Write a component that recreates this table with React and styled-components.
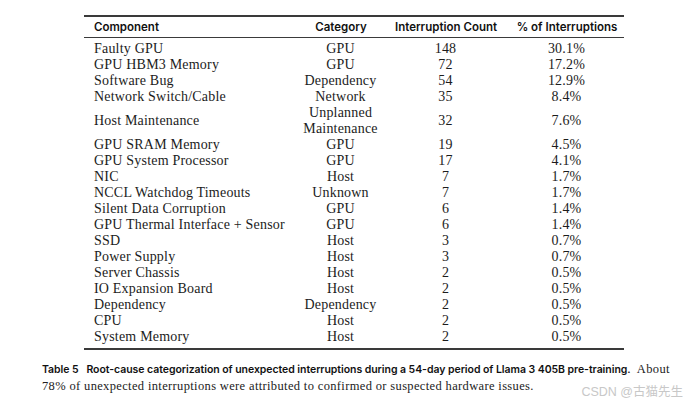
import React from "react";
import styled, { createGlobalStyle } from "styled-components";

const Global = createGlobalStyle`
  html, body { margin: 0; padding: 0; background: #ffffff; }
  body { width: 693px; height: 405px; overflow: hidden; }
`;

const Page = styled.div`
  position: relative;
  width: 693px;
  height: 405px;
  padding: 15px 0 0 42px;
  box-sizing: border-box;
  color: #1c1c1c;
`;

const Table = styled.table`
  margin-left: 42px;
  width: 540px;
  border-collapse: collapse;
  table-layout: fixed;
  border-top: 2px solid #3a3a3a;
  border-bottom: 2px solid #3a3a3a;
`;

const HeadCell = styled.th`
  font-family: Inter, "Liberation Sans", sans-serif;
  font-weight: 600;
  font-size: 11.5px;
  height: 20px;
  padding: 0 ${(p) => (p.$first ? "0 0 10px" : "0")};
  text-align: ${(p) => (p.$first ? "left" : "center")};
  border-bottom: 1px solid #3a3a3a;
  white-space: nowrap;
  color: #111;
`;

const Row = styled.tr`
  td {
    padding-top: ${(p) => (p.$firstRow ? "3px" : "0")};
    padding-bottom: ${(p) => (p.$lastRow ? "3px" : "0")};
  }
`;

const Cell = styled.td`
  font-family: "Liberation Serif", "DejaVu Serif", serif;
  font-size: 14px;
  line-height: 16px;
  letter-spacing: 0.2px;
  text-align: ${(p) => (p.$first ? "left" : "center")};
  padding-left: ${(p) => (p.$first ? "10px" : "0")};
  white-space: nowrap;
  vertical-align: middle;
`;

const Caption = styled.div`
  margin-top: 11px;
  width: 630px;
  font-family: "Liberation Serif", "DejaVu Serif", serif;
  font-size: 12.5px;
  line-height: 16px;
  letter-spacing: 0.35px;
  color: #222;
`;

const CaptionLine = styled.div`
  white-space: nowrap;
`;

const CaptionLead = styled.span`
  font-family: Inter, "Liberation Sans", sans-serif;
  font-weight: 600;
  font-size: 10.5px;
  letter-spacing: -0.05px;
  color: #111;
`;

const Watermark = styled.div`
  position: absolute;
  right: 10px;
  bottom: 5px;
  font-family: "Liberation Sans", "Noto Sans CJK SC", sans-serif;
  font-size: 12.5px;
  color: #c8c8c8;
  white-space: nowrap;
`;

const rows = [
  ["Faulty GPU", "GPU", "148", "30.1%"],
  ["GPU HBM3 Memory", "GPU", "72", "17.2%"],
  ["Software Bug", "Dependency", "54", "12.9%"],
  ["Network Switch/Cable", "Network", "35", "8.4%"],
  ["Host Maintenance", ["Unplanned", "Maintenance"], "32", "7.6%"],
  ["GPU SRAM Memory", "GPU", "19", "4.5%"],
  ["GPU System Processor", "GPU", "17", "4.1%"],
  ["NIC", "Host", "7", "1.7%"],
  ["NCCL Watchdog Timeouts", "Unknown", "7", "1.7%"],
  ["Silent Data Corruption", "GPU", "6", "1.4%"],
  ["GPU Thermal Interface + Sensor", "GPU", "6", "1.4%"],
  ["SSD", "Host", "3", "0.7%"],
  ["Power Supply", "Host", "3", "0.7%"],
  ["Server Chassis", "Host", "2", "0.5%"],
  ["IO Expansion Board", "Host", "2", "0.5%"],
  ["Dependency", "Dependency", "2", "0.5%"],
  ["CPU", "Host", "2", "0.5%"],
  ["System Memory", "Host", "2", "0.5%"],
];

export default function App() {
  return (
    <>
      <Global />
      <Page>
        <Table>
          <colgroup>
            <col style={{ width: "216px" }} />
            <col style={{ width: "82px" }} />
            <col style={{ width: "128px" }} />
            <col style={{ width: "114px" }} />
          </colgroup>
          <thead>
            <tr>
              <HeadCell $first>Component</HeadCell>
              <HeadCell>Category</HeadCell>
              <HeadCell>Interruption Count</HeadCell>
              <HeadCell>% of Interruptions</HeadCell>
            </tr>
          </thead>
          <tbody>
            {rows.map((r, i) => (
              <Row key={r[0]} $firstRow={i === 0} $lastRow={i === rows.length - 1}>
                <Cell $first>{r[0]}</Cell>
                <Cell>
                  {Array.isArray(r[1]) ? (
                    <>
                      {r[1][0]}
                      <br />
                      {r[1][1]}
                    </>
                  ) : (
                    r[1]
                  )}
                </Cell>
                <Cell>{r[2]}</Cell>
                <Cell>{r[3]}</Cell>
              </Row>
            ))}
          </tbody>
        </Table>
        <Caption>
          <CaptionLine>
            <CaptionLead>
              Table 5&nbsp;&nbsp; Root-cause categorization of unexpected interruptions during a 54-day period of Llama 3 405B pre-training.
            </CaptionLead>
            &nbsp; About
          </CaptionLine>
          <CaptionLine>
            78% of unexpected interruptions were attributed to confirmed or suspected hardware issues.
          </CaptionLine>
        </Caption>
        <Watermark>CSDN @古猫先生</Watermark>
      </Page>
    </>
  );
}
